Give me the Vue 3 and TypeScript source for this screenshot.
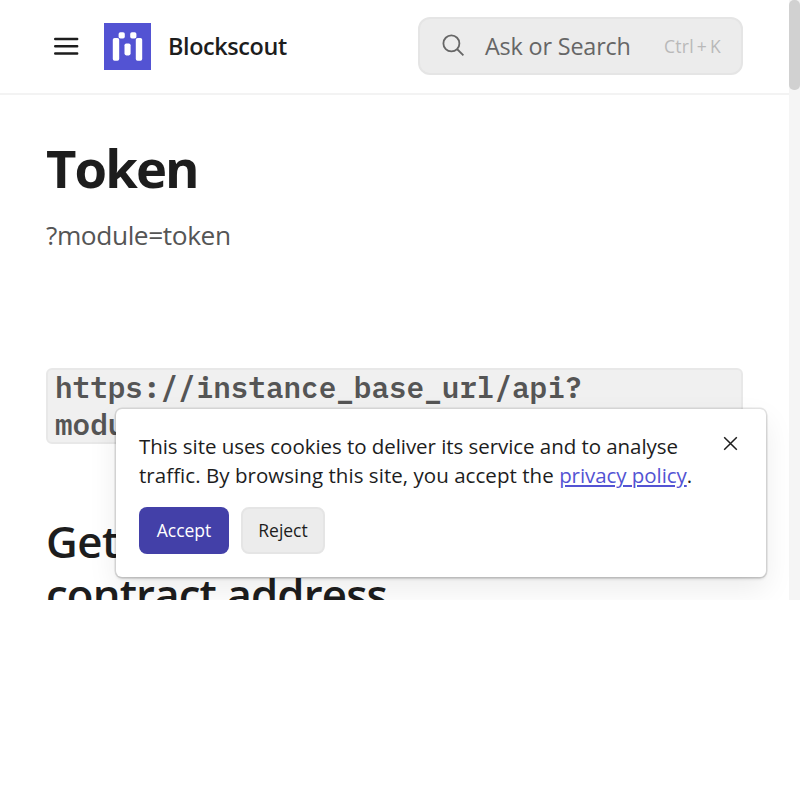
<script setup lang="ts">
import { ref } from 'vue'

const siteName = 'Blockscout'
const cookiesOpen = ref<boolean>(true)

function dismiss(): void {
  cookiesOpen.value = false
}
</script>

<template>
  <div class="viewport">
    <div class="page">
      <header class="header">
        <button class="menu" aria-label="Menu">
          <svg width="26" height="20" viewBox="0 0 26 20">
            <path d="M2.2 3H24.2M2.2 10.2H24.2M2.2 17.5H24.2" stroke="#1d1d1d" stroke-width="2.4" stroke-linecap="round" />
          </svg>
        </button>
        <svg class="logo" width="47" height="47" viewBox="0 0 47 47">
          <rect width="47" height="47" fill="#5353d3" />
          <g fill="#fff">
            <rect x="8.8" y="15" width="6.4" height="22.8" rx="1.8" />
            <rect x="14.6" y="9.2" width="6.2" height="6.4" rx="1.8" />
            <rect x="26.2" y="9.2" width="6.2" height="6.4" rx="1.8" />
            <rect x="31.8" y="15" width="6.4" height="22.8" rx="1.8" />
            <rect x="20.5" y="20.4" width="6.1" height="12" rx="1.8" />
          </g>
        </svg>
        <span class="name">{{ siteName }}</span>
        <div class="search">
          <svg width="24" height="24" viewBox="0 0 24 24" fill="none" stroke="#666" stroke-width="1.8">
            <circle cx="9.4" cy="9.4" r="8" />
            <path d="M15 15L21.4 21.4" />
          </svg>
          <span class="placeholder">Ask or Search</span>
          <span class="shortcut">Ctrl + K</span>
        </div>
      </header>
      <main class="content">
        <h1>Token</h1>
        <p class="lead">?module=token</p>
        <div class="code">https://instance_base_url/api?<br />module=token</div>
        <h2>Get token by<br /><span class="rest">contract address</span></h2>
      </main>
    </div>
    <div class="scrollbar"><div class="thumb"></div></div>
    <section v-if="cookiesOpen" class="cookies">
      <div class="message">
        <p>
          <span class="l1">This site uses cookies to deliver its service and to analyse</span><br />
          <span class="l2">traffic. By browsing this site, you accept the <a>privacy policy</a>.</span>
        </p>
        <button class="close" aria-label="Close" @click="dismiss">
          <svg width="15" height="15" viewBox="0 0 15 15">
            <path d="M1.2 1.2L13.8 13.8M13.8 1.2L1.2 13.8" stroke="#1d1d1d" stroke-width="1.5" />
          </svg>
        </button>
      </div>
      <div class="actions">
        <button class="btn accept" @click="dismiss">Accept</button>
        <button class="btn reject" @click="dismiss">Reject</button>
      </div>
    </section>
  </div>
</template>

<style>
body {
  margin: 0;
  background: #fff;
}
</style>

<style scoped>
* {
  box-sizing: border-box;
}
.viewport {
  position: relative;
  display: flex;
  width: 800px;
  height: 600px;
  overflow: hidden;
  font-family: "Open Sans", "Noto Sans", sans-serif;
  color: #1d1d1d;
}
button {
  font: inherit;
  color: inherit;
  border: 0;
  background: none;
  padding: 0;
}
svg {
  display: block;
}
.page {
  flex: 1;
}
.header {
  display: flex;
  align-items: center;
  height: 95px;
  padding: 0 46px 1px 53px;
  border-bottom: 2px solid #f3f3f3;
}
.logo {
  margin-left: 25px;
}
.name {
  margin-left: 17px;
  font-size: 23.4px;
  font-weight: 600;
  letter-spacing: -0.38px;
}
.search {
  display: flex;
  align-items: center;
  width: 325px;
  height: 58px;
  margin: 0 0 1px auto;
  padding: 0 20px 0 22px;
  border: 2px solid #e5e5e5;
  border-radius: 12px;
  background: #ececec;
}
.placeholder {
  margin-left: 19px;
  font-size: 23.4px;
  letter-spacing: -0.18px;
  color: #666;
  white-space: nowrap;
}
.shortcut {
  margin-left: auto;
  font-size: 17.5px;
  letter-spacing: 0.3px;
  word-spacing: -2px;
  color: #b9b9b9;
  white-space: nowrap;
}
.content {
  padding: 37px 46px 0;
}
h1 {
  margin: 0;
  font-size: 52.6px;
  line-height: 72px;
  font-weight: 700;
  letter-spacing: -1.9px;
}
.lead {
  margin: 11px 0 0;
  font-size: 26.3px;
  line-height: 40px;
  letter-spacing: -0.42px;
  color: #555;
}
.code {
  height: 76px;
  margin-top: 113px;
  padding: 0 7px;
  border: 2px solid #e8e8e8;
  border-radius: 6px;
  background: #f0f0f0;
  color: #555;
  font-family: "IBM Plex Mono", "Liberation Mono", monospace;
  font-size: 29.3px;
  line-height: 37px;
  font-weight: 600;
}
.code::before {
  content: "";
  display: block;
  margin-top: -1px;
}
h2 {
  margin: 71px 0 0;
  font-size: 43.8px;
  line-height: 53px;
  font-weight: 600;
  letter-spacing: -0.5px;
}
.rest {
  letter-spacing: -0.88px;
}
.scrollbar {
  width: 11px;
  background: #f5f5f5;
}
.thumb {
  height: 90px;
  border-radius: 5px;
  background: #d1d1d1;
}
.cookies {
  position: absolute;
  left: 116px;
  top: 409px;
  width: 650px;
  height: 168px;
  padding: 23px;
  border-radius: 6px;
  background: #fff;
  box-shadow: 0 0 0 1.5px rgba(0, 0, 0, 0.1), 0 2px 3px rgba(0, 0, 0, 0.14), 0 12px 30px rgba(0, 0, 0, 0.08);
}
.message {
  display: flex;
  justify-content: space-between;
  align-items: flex-start;
}
.message p {
  margin: 0;
  font-size: 20.5px;
  line-height: 29px;
  white-space: nowrap;
}
.l1 {
  letter-spacing: -0.055px;
}
.l2 {
  letter-spacing: 0.045px;
}
.message a {
  color: #5353d3;
  letter-spacing: -0.06px;
  text-decoration: underline;
  text-decoration-thickness: 2px;
  text-underline-offset: 2px;
}
.close {
  margin: 4px 5px 0 0;
}
.actions {
  display: flex;
  gap: 12px;
  margin-top: 17px;
}
.btn {
  height: 47px;
  padding-bottom: 2px;
  border-radius: 8px;
  font-size: 17.5px;
}
.accept {
  width: 90px;
  background: #4340a8;
  color: #fff;
}
.reject {
  width: 84px;
  background: #ececec;
  border: 2px solid #e5e5e5;
}
</style>
